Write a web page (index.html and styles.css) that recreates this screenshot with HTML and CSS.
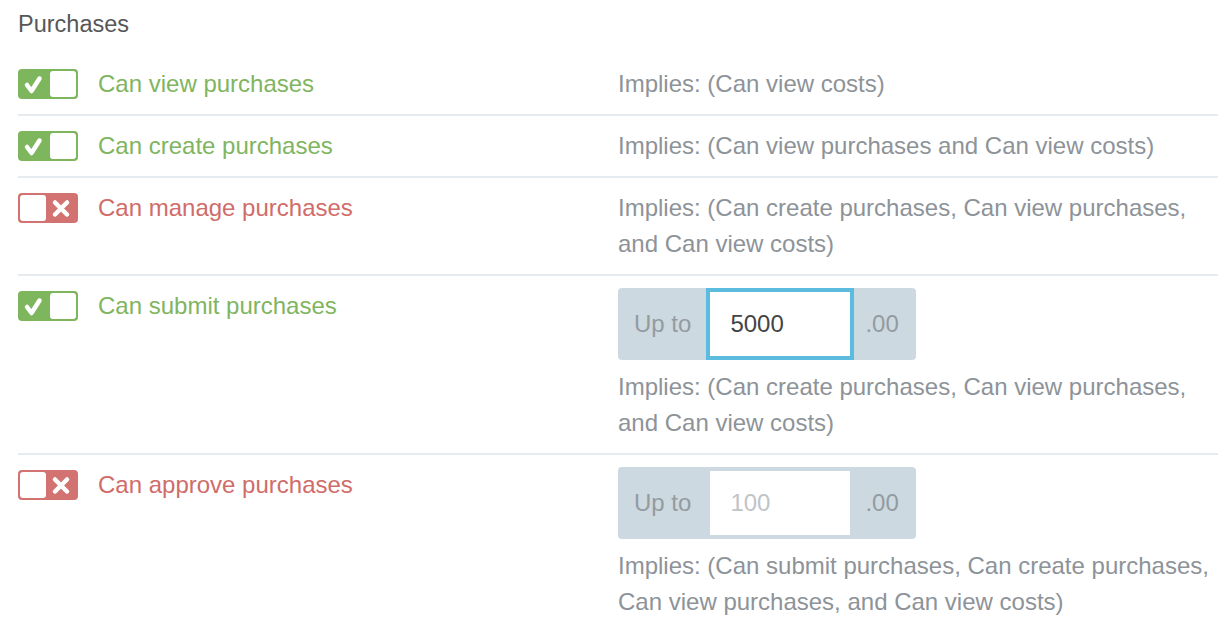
FILE: index.html
```html
<!DOCTYPE html>
<html lang="en">
<head>
    <meta charset="UTF-8">
    <title>Purchases permissions</title>
    <link rel="stylesheet" href="styles.css">
</head>
<body>
    <div class="permissions">
        <h2 class="group-title">Purchases</h2>

        <div class="perm-row">
            <span class="toggle on">
                <svg width="60" height="30" viewBox="0 0 60 30"><rect x="0" y="0" width="60" height="30" rx="4" class="track"/><rect x="32" y="2" width="26" height="26" rx="3" fill="#fff"/><path d="M9 16 L13.5 22 L21.5 9.5" class="mark"/></svg>
            </span>
            <span class="perm-name">Can view purchases</span>
            <div class="perm-info">
                <div class="implies">Implies: (Can view costs)</div>
            </div>
        </div>

        <div class="perm-row">
            <span class="toggle on">
                <svg width="60" height="30" viewBox="0 0 60 30"><rect x="0" y="0" width="60" height="30" rx="4" class="track"/><rect x="32" y="2" width="26" height="26" rx="3" fill="#fff"/><path d="M9 16 L13.5 22 L21.5 9.5" class="mark"/></svg>
            </span>
            <span class="perm-name">Can create purchases</span>
            <div class="perm-info">
                <div class="implies">Implies: (Can view purchases and Can view costs)</div>
            </div>
        </div>

        <div class="perm-row">
            <span class="toggle off">
                <svg width="60" height="30" viewBox="0 0 60 30"><rect x="0" y="0" width="60" height="30" rx="4" class="track"/><rect x="2" y="2" width="26" height="26" rx="3" fill="#fff"/><path d="M37 9.5 L49 21.5 M49 9.5 L37 21.5" class="mark"/></svg>
            </span>
            <span class="perm-name">Can manage purchases</span>
            <div class="perm-info">
                <div class="implies">Implies: (Can create purchases, Can view purchases, and Can view costs)</div>
            </div>
        </div>

        <div class="perm-row">
            <span class="toggle on">
                <svg width="60" height="30" viewBox="0 0 60 30"><rect x="0" y="0" width="60" height="30" rx="4" class="track"/><rect x="32" y="2" width="26" height="26" rx="3" fill="#fff"/><path d="M9 16 L13.5 22 L21.5 9.5" class="mark"/></svg>
            </span>
            <span class="perm-name">Can submit purchases</span>
            <div class="perm-info">
                <div class="limit">
                    <span class="addon">Up to</span>
                    <input class="amount focused" type="text" value="5000">
                    <span class="addon cents">.00</span>
                </div>
                <div class="implies">Implies: (Can create purchases, Can view purchases, and Can view costs)</div>
            </div>
        </div>

        <div class="perm-row">
            <span class="toggle off">
                <svg width="60" height="30" viewBox="0 0 60 30"><rect x="0" y="0" width="60" height="30" rx="4" class="track"/><rect x="2" y="2" width="26" height="26" rx="3" fill="#fff"/><path d="M37 9.5 L49 21.5 M49 9.5 L37 21.5" class="mark"/></svg>
            </span>
            <span class="perm-name">Can approve purchases</span>
            <div class="perm-info">
                <div class="limit">
                    <span class="addon">Up to</span>
                    <input class="amount" type="text" placeholder="100">
                    <span class="addon cents">.00</span>
                </div>
                <div class="implies">Implies: (Can submit purchases, Can create purchases, Can view purchases, and Can view costs)</div>
            </div>
        </div>
    </div>
</body>
</html>
```

FILE: styles.css
```css
body {
    margin: 0;
    font-family: 'Liberation Sans', Arial, sans-serif;
    background: #fff;
    color: #555;
    overflow: hidden;
}
.permissions {
    width: 1200px;
    margin-left: 18px;
    padding-top: 9px;
}
.group-title {
    margin: 0 0 15px;
    font-size: 23.5px;
    line-height: 30px;
    font-weight: normal;
    color: #575757;
}
.perm-row {
    display: grid;
    grid-template-columns: 60px 500px 1fr;
    column-gap: 20px;
    align-items: start;
    padding: 12px 0;
    border-bottom: 2px solid #e5ebef;
    font-size: 24px;
    line-height: 36px;
}
.toggle {
    display: flex;
    align-items: center;
    height: 36px;
}
.toggle svg {
    display: block;
}
.toggle .mark {
    fill: none;
    stroke: #fff;
    stroke-width: 4.5;
    stroke-linecap: round;
    stroke-linejoin: round;
}
.toggle.on .track {
    fill: #7db65d;
}
.toggle.off .track {
    fill: #d27371;
}
.perm-row:has(.toggle.on) .perm-name {
    color: #7fb560;
}
.perm-row:has(.toggle.off) .perm-name {
    color: #d06c69;
}
.implies {
    color: #8d9398;
}
.limit {
    display: flex;
    align-items: stretch;
    width: 298px;
    height: 72px;
    margin-bottom: 9px;
    background: #cdd9e0;
    border-radius: 4px;
}
.addon {
    display: flex;
    align-items: center;
    padding: 0 15px 0 16px;
    color: #939ba1;
}
.addon.cents {
    padding: 0 16px 0 11px;
}
.amount {
    box-sizing: border-box;
    width: 148px;
    height: 72px;
    margin: 0;
    padding: 0 0 0 20px;
    border: 4px solid #cdd9e0;
    background: #fff;
    font-family: inherit;
    font-size: 24px;
    color: #444;
    outline: none;
}
.amount.focused {
    border-color: #5bbcdf;
}
.amount::placeholder {
    color: #bfc4c7;
}
```
